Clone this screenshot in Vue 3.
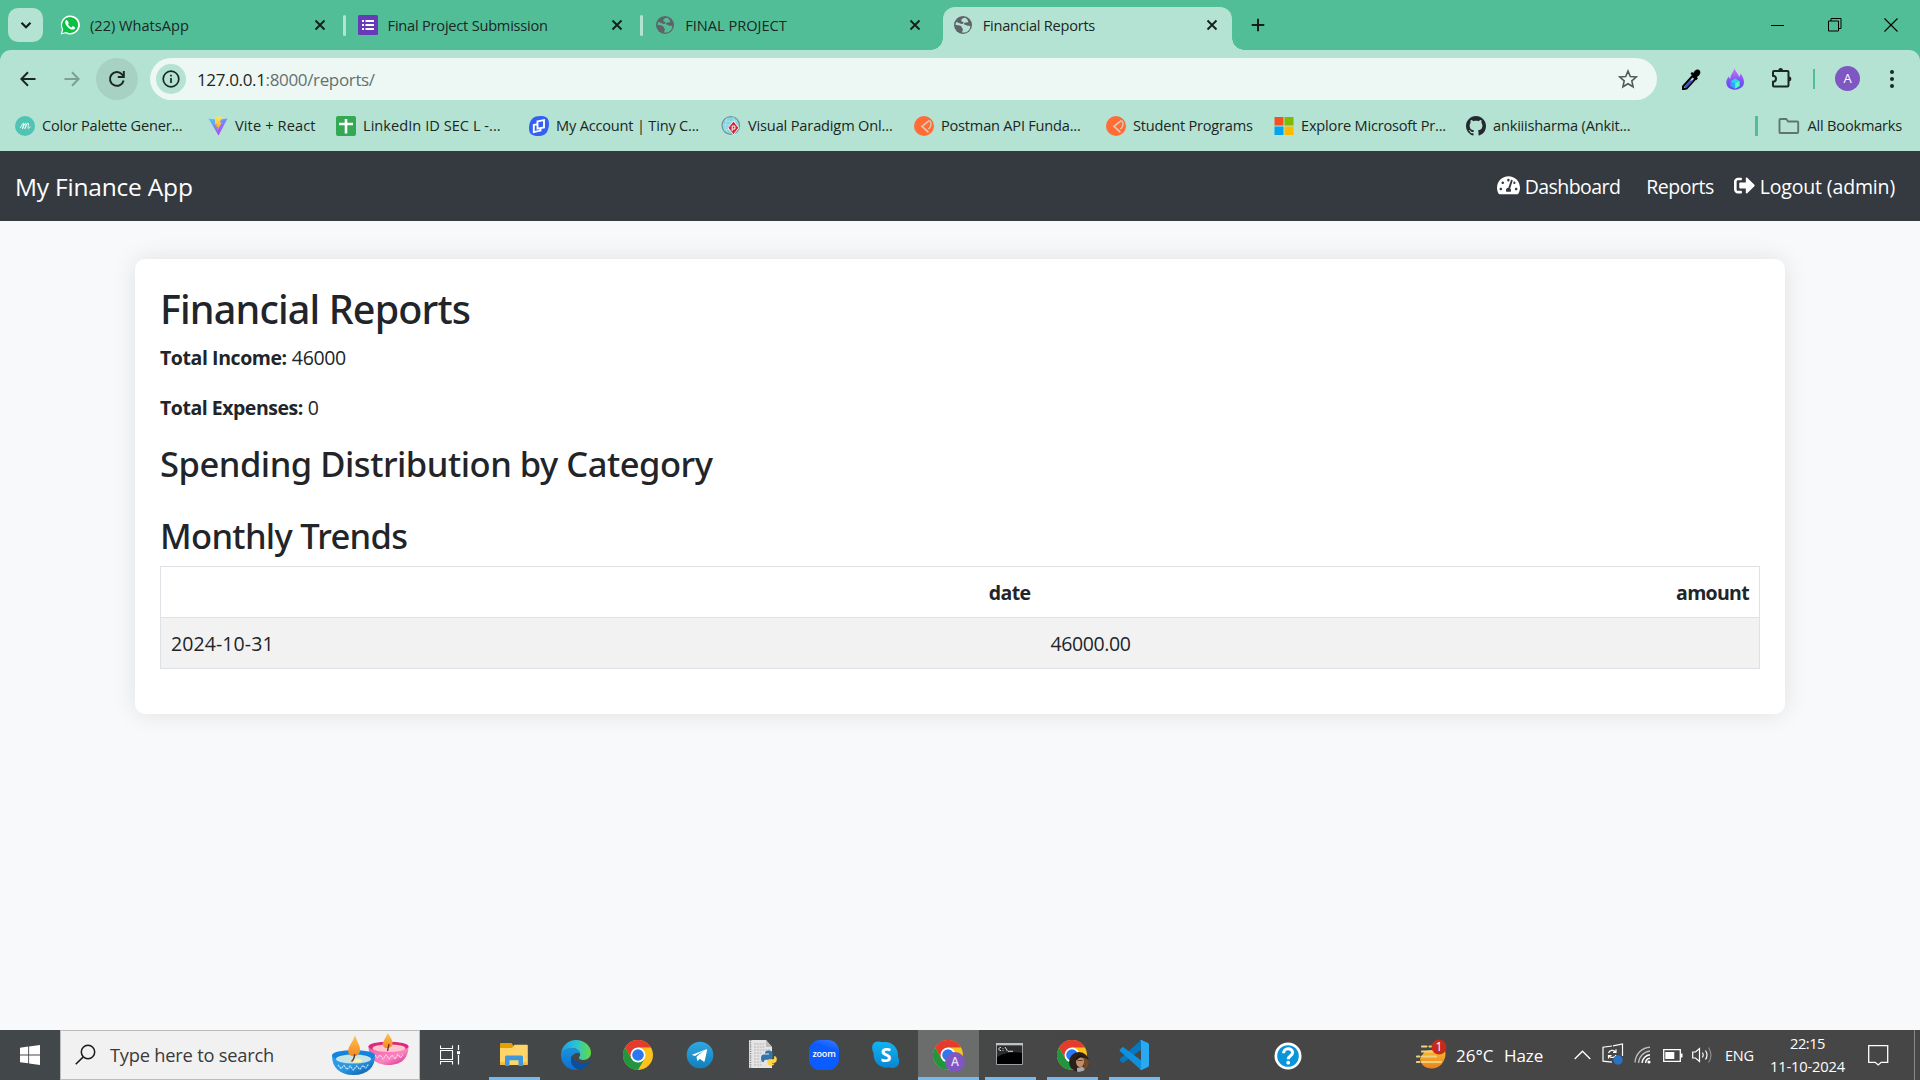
<script setup>
const tabs = [
  { icon: 'whatsapp', title: '(22) WhatsApp', track: 0 },
  { icon: 'forms', title: 'Final Project Submission', track: -0.22 },
  { icon: 'globe', title: 'FINAL PROJECT', track: 0 },
  { icon: 'globe', title: 'Financial Reports', track: -0.25, active: true },
]

const bookmarks = [
  { icon: 'palette', title: 'Color Palette Gener...', width: 193, track: -0.2 },
  { icon: 'vite', title: 'Vite + React', width: 128, track: 0.12 },
  { icon: 'sheets', title: 'LinkedIn ID SEC L -...', width: 193, track: 0.03 },
  { icon: 'tiny', title: 'My Account | Tiny C...', width: 192, track: -0.2 },
  { icon: 'paradigm', title: 'Visual Paradigm Onl...', width: 193, track: -0.16 },
  { icon: 'postman', title: 'Postman API Funda...', width: 192, track: -0.22 },
  { icon: 'postman', title: 'Student Programs', width: 168, track: -0.22 },
  { icon: 'microsoft', title: 'Explore Microsoft Pr...', width: 192, track: -0.2 },
  { icon: 'github', title: 'ankiiisharma (Ankit...', width: 180, track: -0.2 },
]

const rows = [{ date: '2024-10-31', amount: '46000.00' }]

const taskItems = [
  { icon: 'explorer', open: true },
  { icon: 'edge' },
  { icon: 'chrome' },
  { icon: 'telegram' },
  { icon: 'python' },
  { icon: 'zoom' },
  { icon: 'skype' },
  { icon: 'chrome', badge: 'letter', open: true, active: true },
  { icon: 'cmd', open: true },
  { icon: 'chrome', badge: 'photo', open: true },
  { icon: 'vscode', open: true },
]
</script>

<template>
  <div class="screen">
    <header class="browser">
      <div class="strip">
        <button class="tab-search">
          <svg width="14" height="14" viewBox="0 0 14 14"><path d="M2.5 4.7 7 9.2l4.5-4.5" fill="none" stroke="#15201b" stroke-width="2.2" /></svg>
        </button>
        <div class="tabs">
          <div v-for="(t, i) in tabs" :key="i" class="tab" :class="{ active: t.active, divided: i < 2 }">
            <svg v-if="t.icon === 'whatsapp'" width="20" height="20" viewBox="0 0 20 20">
              <path d="M.6 19.6 2 14.5A9.5 9.5 0 1 1 5.6 18.200z" fill="#fff" />
              <path d="M2.300 17.900l1-3.600a8 8 0 1 1 2.800 2.700z" fill="#0ac143" />
              <path d="M7.100 5.300c-.3-.5-.8-.5-1.200-.1-1.400 1.400-1 3.400.9 5.700 2 2.500 4.700 4.200 6.700 3.600 1.300-.4 1.700-1.500 1.500-2.300l-2.300-1.100-1.200 1.300c-1.500-.5-2.800-1.700-3.500-3.200l.8-1.100z" fill="#fff" />
            </svg>
            <svg v-else-if="t.icon === 'forms'" width="20" height="20" viewBox="0 0 20 20">
              <rect width="20" height="20" rx="1.500" fill="#673ab7" />
              <path d="M4 5h2v2H4zm3.500 0H16v2H7.500zM4 9h2v2H4zm3.500 0H16v2H7.500zM4 13h2v2H4zm3.500 0H16v2H7.500z" fill="#fff" />
            </svg>
            <svg v-else width="20" height="20" viewBox="0 0 24 24">
              <circle cx="12" cy="12" r="10.800" fill="#5f6368" />
              <path :fill="t.active ? '#b4e3d3' : '#52be98'" d="M14.500 3.300c-2 .5-4.500 1-4.600 3.300 0 1.500 1.500 1.400 2.300 1.900 1 .7.2 2.200-1.200 2.200-1.900.1-4.600-1.500-5.700-2.100-1.700-.9-2.200 1.600-2.200 3.400 1.700 0 4.500.200 6.300 1.100 1.500.8.7 2.100 1.800 2.900 1.300.9.500 2.500-.5 4.900 5.200 1.200 9.300-2.300 10-6.300.3-1.600-1-1.800-2.400-1.700-1.700.1-2.200-1.200-3.800-1.300-1.300-.1-1.900-1.200-.8-2.100 1.200-.9 3.200-.5 4.700-.8-.4-2.500-1.800-4.400-3.900-5.400z" />
            </svg>
            <span class="tab-title" :style="{ letterSpacing: t.track + 'px' }">{{ t.title }}</span>
            <svg class="tab-close" width="12" height="12" viewBox="0 0 12 12"><path d="m1.500 1.500 9 9m0-9-9 9" stroke="#15201b" stroke-width="1.900" /></svg>
          </div>
        </div>
        <svg class="new-tab" width="14" height="14" viewBox="0 0 14 14"><path d="M7 .7v12.600M.7 7h12.600" stroke="#15201b" stroke-width="2" /></svg>
        <div class="window-buttons">
          <svg width="14" height="14" viewBox="0 0 14 14"><path d="M0 7.500h13" stroke="#000" /></svg>
          <svg width="14" height="14" viewBox="0 0 14 14" fill="none" stroke="#000"><path d="M.5 3h10v10H.5zM3 3V.5h10v10h-2.500" /></svg>
          <svg width="14" height="14" viewBox="0 0 14 14"><path d="m.5.5 13 13m0-13-13 13" stroke="#000" stroke-width="1.100" /></svg>
        </div>
      </div>

      <div class="toolbar">
        <div class="address-row">
          <svg class="nav-back" width="16" height="16" viewBox="0 0 16 16" fill="none" stroke="#1b2723" stroke-width="2"><path d="M15.500 8H1.500M8 1.300 1.400 8 8 14.700" /></svg>
          <svg class="nav-forward" width="16" height="16" viewBox="0 0 16 16" fill="none" stroke="#7da094" stroke-width="2"><path d="M.5 8h14M8 1.300 14.600 8 8 14.700" /></svg>
          <span class="reload">
            <svg width="18" height="18" viewBox="0 0 18 18" fill="none" stroke="#1b2723" stroke-width="2"><path d="M15.600 10.500A6.900 6.900 0 1 1 14 4.300l1.400 1.500" /><path d="M15.800 1v6h-6" /></svg>
          </span>
          <div class="omnibox">
            <span class="site-info">
              <svg width="18" height="18" viewBox="0 0 18 18"><circle cx="9" cy="9" r="7.800" fill="none" stroke="#1b2723" stroke-width="1.700" /><path d="M9 8v5M9 4.800v1.800" stroke="#1b2723" stroke-width="1.700" /></svg>
            </span>
            <span class="url"><span class="host">127.0.0.1</span>:8000/reports/</span>
            <svg class="star" width="20" height="20" viewBox="0 0 20 20"><path d="m10 2 2.300 5.500 6 .5-4.500 3.900 1.300 5.900-5.100-3.100-5.100 3.100 1.300-5.900L1.700 8l6-.5z" fill="none" stroke="#4e5d57" stroke-width="1.600" /></svg>
          </div>
          <svg class="pipette" width="20" height="21" viewBox="0 0 20 21">
            <path d="M2 17.500 11.500 7l3 2.800L5.500 19.500l-3.500.6z" fill="#b9d7ff" stroke="#000" stroke-width="2" />
            <path d="m3 18 6-6.500h3.500L5 19.300z" fill="#3c53b8" />
            <path d="M9.500 4.500 11 3l1.500 1c1-2.500 2.500-3.800 4.500-3.500 2 .4 3 2.500 2 4.500-.6 1.200-1.700 2.200-3 3l.8 1.500-1.600 1.700z" fill="#000" />
          </svg>
          <svg class="flame" width="18" height="22" viewBox="0 0 18 22">
            <defs><linearGradient id="flame" x1="0" y1="0" x2="0" y2="1"><stop offset="0" stop-color="#d476ee" /><stop offset=".55" stop-color="#8054fa" /><stop offset="1" stop-color="#5a4ff0" /></linearGradient></defs>
            <path d="M8.500 0c.2 3 4 5.500 4.600 9 .8-.8 1.200-2 1.200-3.500 4 4.500 4.700 9.700 2.300 13C13 22.600 4.500 22.800 1.500 18.500-.9 15 .5 11 3 8.300c.1 1.500.6 2.300 1.500 2.700C4 7 7.500 4.500 8.500 0z" fill="url(#flame)" />
            <path d="m9.200 10.500 4.300 2.400v5l-4.300 2.600-4.400-2.600v-5z" fill="#28d5ed" /><path d="m4.800 12.900 4.400 2.500v5.100l-4.400-2.600z" fill="#36a3fb" /><path d="m9.200 15.400 4.300-2.500v5l-4.300 2.600z" fill="#4effb5" />
          </svg>
          <svg class="puzzle" width="22" height="22" viewBox="0 0 22 22"><path d="M3 4h13.500q1 0 1 1v13.500q0 1-1 1H3q-1 0-1-1v-3.700c4 0 4-6 0-6V5q0-1 1-1z" fill="none" stroke="#1b2723" stroke-width="2" /><path d="M7.200 3.500a2.400 2.400 0 0 1 4.800 0zM18 9.600a2.400 2.400 0 0 1 0 4.800z" fill="#1b2723" /></svg>
          <span class="rule"></span>
          <span class="avatar">A</span>
          <svg class="kebab" width="6" height="20" viewBox="0 0 6 20" fill="#1b2723"><circle cx="3" cy="3" r="2" /><circle cx="3" cy="10" r="2" /><circle cx="3" cy="17" r="2" /></svg>
        </div>

        <div class="bookmarks">
          <div v-for="b in bookmarks" :key="b.title" class="bookmark" :style="{ width: b.width + 'px' }">
            <svg v-if="b.icon === 'palette'" width="20" height="20" viewBox="0 0 20 20">
              <circle cx="10" cy="10" r="10" fill="#4fc4b4" />
              <path d="M5 12c1.200-.8 2.200-4.500 3.300-4.800.8-.2 0 2.800-.9 5.800C8.700 10 9.500 7.500 10.600 7.200c1-.2.1 2.800-.7 5.500 1-2.900 2.100-5.300 3.200-5.500 1.300 0-.8 4.800.1 5.100.7.200 1.500-.7 2.300-1.700" fill="none" stroke="#fff" stroke-width=".9" />
            </svg>
            <svg v-else-if="b.icon === 'vite'" width="20" height="20" viewBox="0 0 20 20">
              <defs><linearGradient id="vite" x1="0" y1="0" x2=".7" y2="1"><stop offset="0" stop-color="#41d1ff" /><stop offset="1" stop-color="#bd34fe" /></linearGradient><linearGradient id="bolt" x1="0" y1="0" x2="0" y2="1"><stop offset="0" stop-color="#ffea55" /><stop offset="1" stop-color="#ffa800" /></linearGradient></defs>
              <path d="M.5 2.500 10 4l9.500-1.500L10.500 19.500z" fill="url(#vite)" />
              <path d="m14 .2-6.800 1.300-.4 7.200 2-.5-.6 2.900 1.700-.5-.8 4.200 4.700-8.300-2 .3z" fill="url(#bolt)" />
            </svg>
            <svg v-else-if="b.icon === 'sheets'" width="20" height="20" viewBox="0 0 20 20">
              <rect width="20" height="20" rx="2" fill="#34a853" /><path d="M10 3v14.500M3 8h14" stroke="#fff" stroke-width="2.600" />
            </svg>
            <svg v-else-if="b.icon === 'tiny'" width="20" height="20" viewBox="0 0 20 20">
              <path d="M3.500 2.500C7-.5 14-.5 17.500 1.500c3 2 3 8 1.500 12-1.500 5-5 6.500-10 6.500-6 0-9-2-9-7.500 0-4 .8-7.500 3.500-10z" fill="#3260f5" />
              <path d="m8.500 5.400 6.500-1.300v7.300l-6.500 1.300zm0 2.800-3.700.9v7l6.700-1.500v-2" fill="none" stroke="#fff" stroke-width="1.900" />
            </svg>
            <svg v-else-if="b.icon === 'paradigm'" width="20" height="20" viewBox="0 0 20 20">
              <circle cx="9.800" cy="9.500" r="8.800" fill="#8dd3df" stroke="#6d9a9e" stroke-width="1.200" /><path d="M4 4c3 2 8 2 12 0M2 9h15M3 14c2-1 6-1 9 0M6 2c-2 5-2 10 0 14M12 1c2 3 3 7 2 12" fill="none" stroke="#a9e4ec" />
              <path d="m12.500 5 5.300 6.800-5.300 7-5.500-7z" fill="#d32732" stroke="#fff" stroke-width=".9" /><path d="m11.200 15V10h2.700v3h-2.500" fill="none" stroke="#fff" />
            </svg>
            <svg v-else-if="b.icon === 'postman'" width="20" height="20" viewBox="0 0 20 20">
              <circle cx="10" cy="10" r="10" fill="#ff6c37" /><path d="M15.500 4.300 8 10.300l6.500 6" fill="none" stroke="#d8cfb4" stroke-width="1.600" /><path d="M15.800 4.600c2 2.800 1.500 6.400-1.500 8.400" fill="none" stroke="#d8cfb4" stroke-width="1.300" />
            </svg>
            <svg v-else-if="b.icon === 'microsoft'" width="20" height="20" viewBox="0 0 20 20">
              <path d="M.5 1h9v8.500h-9z" fill="#f25022" /><path d="M10.500 1H19.500v8.500h-9z" fill="#7fba00" /><path d="M.5 10.500h9v8.500h-9z" fill="#00a4ef" /><path d="M10.500 10.500h9v8.500h-9z" fill="#ffb900" />
            </svg>
            <svg v-else width="20" height="20" viewBox="0 0 16 16">
              <path fill="#24292f" d="M8 0C3.580 0 0 3.580 0 8c0 3.540 2.290 6.530 5.470 7.590.4.070.55-.17.55-.38 0-.19-.01-.82-.01-1.490-2.010.37-2.530-.49-2.690-.94-.09-.23-.48-.94-.82-1.130-.28-.15-.68-.52-.01-.53.63-.01 1.080.58 1.230.82.72 1.210 1.870.87 2.330.66.07-.52.28-.87.51-1.070-1.780-.2-3.640-.89-3.640-3.950 0-.87.31-1.590.82-2.150-.08-.2-.36-1.020.08-2.120 0 0 .67-.21 2.200.82.64-.18 1.320-.27 2-.27s1.360.09 2 .27c1.530-1.040 2.200-.82 2.200-.82.44 1.100.16 1.920.08 2.120.51.56.82 1.270.82 2.150 0 3.070-1.870 3.750-3.650 3.950.29.25.54.73.54 1.480 0 1.070-.01 1.930-.01 2.200 0 .21.15.46.55.38A8.010 8.010 0 0 0 16 8c0-4.420-3.580-8-8-8z" />
            </svg>
            <span :style="{ letterSpacing: b.track + 'px' }">{{ b.title }}</span>
          </div>
          <div class="all-bookmarks">
            <svg width="22" height="18" viewBox="0 0 22 18"><path d="M2.500 2h5.700l2 2.500h9q1 0 1 1v9.500q0 1-1 1H2.500q-1 0-1-1V3q0-1 1-1z" fill="none" stroke="#63746d" stroke-width="1.900" /></svg>
            <span>All Bookmarks</span>
          </div>
        </div>
      </div>
    </header>

    <nav class="navbar">
      <span class="brand">My Finance App</span>
      <div class="links">
        <a class="dashboard">
          <svg width="23" height="20.500" viewBox="0 0 576 512" fill="#fff"><path d="M288 32C128.940 32 0 160.940 0 320c0 52.800 14.250 102.260 39.060 144.800 5.610 9.620 16.300 15.200 27.440 15.200h443c11.140 0 21.830-5.580 27.440-15.200C561.750 422.260 576 372.800 576 320c0-159.060-128.940-288-288-288zm0 64c14.710 0 26.580 10.130 30.320 23.650-1.110 2.260-2.640 4.230-3.450 6.670l-9.220 27.670c-5.130 3.490-10.970 6.010-17.640 6.010-17.670 0-32-14.330-32-32S270.330 96 288 96zM96 384c-17.670 0-32-14.330-32-32s14.330-32 32-32 32 14.330 32 32-14.330 32-32 32zm48-160c-17.670 0-32-14.330-32-32s14.330-32 32-32 32 14.330 32 32-14.330 32-32 32zm246.770-72.410l-61.330 184C343.130 347.330 352 364.540 352 384c0 11.720-3.380 22.550-8.880 32H232.880c-5.500-9.450-8.880-20.280-8.880-32 0-33.940 26.500-61.430 59.900-63.590l61.340-184.010c4.170-12.560 17.730-19.450 30.360-15.170 12.570 4.190 19.350 17.790 15.170 30.360zm14.660 57.200l15.520-46.550c3.470-1.290 7.130-2.230 11.050-2.230 17.670 0 32 14.330 32 32s-14.330 32-32 32c-11.380-.01-20.890-6.280-26.570-15.220zM480 384c-17.670 0-32-14.330-32-32s14.330-32 32-32 32 14.330 32 32-14.330 32-32 32z" /></svg>
          <span>Dashboard</span>
        </a>
        <a class="reports"><span>Reports</span></a>
        <a class="logout">
          <svg width="21" height="21" viewBox="0 0 512 512" fill="#fff"><path d="M497 273L329 441c-15 15-41 4.500-41-17v-96H152c-13.300 0-24-10.700-24-24v-96c0-13.300 10.700-24 24-24h136V88c0-21.400 25.900-32 41-17l168 168c9.300 9.400 9.300 24.600 0 34zM192 436v-40c0-6.600-5.400-12-12-12H96c-17.700 0-32-14.300-32-32V160c0-17.700 14.300-32 32-32h84c6.600 0 12-5.400 12-12V76c0-6.600-5.400-12-12-12H96c-53 0-96 43-96 96v192c0 53 43 96 96 96h84c6.600 0 12-5.400 12-12z" /></svg>
          <span>Logout (admin)</span>
        </a>
      </div>
    </nav>

    <main class="page">
      <section class="card">
        <h1>Financial Reports</h1>
        <p><strong class="income">Total Income:</strong> <span class="figure">46000</span></p>
        <p><strong class="expenses">Total Expenses:</strong> <span class="figure">0</span></p>
        <h2 class="spending">Spending Distribution by Category</h2>
        <h2 class="trends">Monthly Trends</h2>
        <table>
          <thead><tr><th class="col-date">date</th><th class="col-amount">amount</th></tr></thead>
          <tbody><tr v-for="r in rows" :key="r.date"><td class="cell-date">{{ r.date }}</td><td class="cell-amount">{{ r.amount }}</td></tr></tbody>
        </table>
      </section>
    </main>

    <footer class="taskbar">
      <div class="start">
        <svg width="20" height="20" viewBox="0 0 20 20" fill="#fff"><path d="M0 2.800 8.200 1.600v7.900H0zM9.100 1.500 20 0v9.500H9.100zM0 10.400h8.200v7.900L0 17.200zM9.100 10.400H20V20L9.100 18.500z" /></svg>
      </div>
      <div class="search">
        <svg class="lens" width="21" height="21" viewBox="0 0 21 21" fill="none" stroke="#1a1a1a" stroke-width="1.500"><circle cx="13" cy="8" r="6.700" /><path d="M8.300 12.900.7 20.300" /></svg>
        <span class="search-hint">Type here to search</span>
        <svg class="diyas" width="78" height="44" viewBox="0 0 78 44">
          <defs>
            <linearGradient id="blue" x1="0" x2="1" y2="1"><stop offset="0" stop-color="#2b9cf0" /><stop offset=".5" stop-color="#2b97e0" /><stop offset="1" stop-color="#0754a3" /></linearGradient>
            <linearGradient id="pink" x1="0" x2="1" y2="1"><stop offset="0" stop-color="#f35ea9" /><stop offset=".6" stop-color="#fb83c0" /><stop offset="1" stop-color="#cf237e" /></linearGradient>
            <linearGradient id="fire" x1="0" x2="0" y2="1"><stop offset="0" stop-color="#ffc552" /><stop offset="1" stop-color="#f5861f" /></linearGradient>
          </defs>
          <path d="M36.500 13c0 10 5 19 20 19s20-9 20-19z" fill="url(#pink)" /><ellipse cx="56.500" cy="13.500" rx="20" ry="4.800" fill="#da2a7c" /><ellipse cx="57" cy="15.300" rx="16.500" ry="3.800" fill="#ffc4cd" />
          <path d="m43 22 2.500 3L48 22l3 4 3-4 3 4 3-4 3 4 3-4.500 2.500 3L71 21.500" fill="none" stroke="#ffd9ec" stroke-width="1.100" stroke-dasharray="2 .8" />
          <path d="M55.500 0c3 4 6 8 4.800 12-1 3.400-7 4.200-8.800 1.500-2.600-4 2.500-7.500 4-13.500z" fill="url(#fire)" /><path d="m55.500 18 1.500-7" stroke="#6a3526" stroke-width="1.300" />
          <path d="M0 22.500C0 34 7 42 21.500 42S43 34 43 22.500z" fill="url(#blue)" /><ellipse cx="21.500" cy="22.500" rx="21.500" ry="5.500" fill="#1284e0" /><ellipse cx="21.500" cy="26" rx="17.500" ry="4.500" fill="#c7e4e4" /><ellipse cx="25" cy="27.500" rx="5" ry="2" fill="#fff0a8" />
          <path d="m6 32 3 3.500 3-3 3 4 3.200-3.500 3.200 4 3.200-4 3.200 3.500 3-4 3 2.500 2.500-3.500" fill="none" stroke="#bfe3fb" stroke-width="1.200" stroke-dasharray="2 .8" />
          <path d="M23 2c1.500 6 6 11 5 16.500-1.200 5.500-9.500 6.500-11.500 1.500-2-5.500 5-11 6.500-18z" fill="url(#fire)" /><path d="M19.500 28.500c2.200-1.500 3-4 3.200-7.500" fill="none" stroke="#6a3526" stroke-width="1.400" />
        </svg>
      </div>
      <div class="task-view">
        <svg width="21" height="20" viewBox="0 0 21 20" fill="none" stroke="#fff"><path d="M.5.5V3.500h12V.5M.5 5.500h12v9H.5zM.5 19.500v-3h12v3" stroke-width="1.100" /><path d="M18.500 0v5M18.500 10v9.500" stroke-width="1.200" /><path d="M17 6.200h3v3h-3z" fill="#fff" stroke="none" /></svg>
      </div>

      <div class="apps">
        <div v-for="(a, i) in taskItems" :key="i" class="app" :class="{ open: a.open, active: a.active }">
          <svg v-if="a.icon === 'explorer'" width="30" height="30" viewBox="0 0 30 30">
            <path d="M1 4q0-1 1-1h10.500l1.800 2.500V9H1z" fill="#e2a100" /><path d="M1 8h12l2.500-3.200H28q.8 0 .8 1V24q0 1-1 1H2q-1 0-1-1z" fill="#ffd56a" />
            <path d="M6 26v-9q0-1.500 1.500-1.500h15q1.500 0 1.500 1.500v9h-4.500v-5.800h-9V26z" fill="#3c99dd" /><path d="M1 22h5v3H2q-1 0-1-1zm23 0h4.800v2q0 1-1 1H24z" fill="#f4bd45" />
          </svg>
          <svg v-else-if="a.icon === 'edge'" width="30" height="30" viewBox="0 0 30 30">
            <defs>
              <linearGradient id="edge-a" x1="0" x2="1"><stop offset="0" stop-color="#1b9fe2" /><stop offset=".5" stop-color="#2cc3d5" /><stop offset="1" stop-color="#62dd3f" /></linearGradient>
              <linearGradient id="edge-b" x1="0" y1="0" x2="0" y2="1"><stop offset="0" stop-color="#1a93dc" /><stop offset="1" stop-color="#0d6fd0" /></linearGradient>
            </defs>
            <path d="M0 14C.8 5.800 7 0 15 0c8.300 0 15 5.800 15 12.800 0 4.500-3.500 7.200-7.500 7.200-3 0-4.700-1.200-4.500-2.500.2-1 1.200-1.400 1.200-3.300C19.200 11 15.500 8 10.800 8 6.500 8 2 10.500 0 14z" fill="url(#edge-a)" />
            <path d="M0 14C2 10 6.500 7.500 10.800 8c4.700 0 8.400 3 8.400 6.200-1.500-2-6.500-2-8.600 2.800-2 5 1 10.500 6.800 12.800C8 31.500 0 24 0 16z" fill="url(#edge-b)" />
            <path d="M10.600 16c-2 5.500 1 12 7.400 13.700 4.500-.6 8.500-3.200 10.500-7.200.3-.7-.2-1-.8-.7-5.500 2.700-14.700 1-17.100-5.800z" fill="#0c4fa0" />
          </svg>
          <svg v-else-if="a.icon === 'chrome'" width="30" height="30" viewBox="0 0 30 30">
            <circle cx="15" cy="15" r="15" fill="#fcc21b" /><path d="M2 7.500A15 15 0 0 1 28 7.500H15v7.500L8.500 18.700z" fill="#e33b2e" /><path d="M2 7.500 8.500 18.700 15 15l6.500 3.700L15 30A15 15 0 0 1 2 7.500z" fill="#21963f" />
            <circle cx="15" cy="15" r="7.500" fill="#fff" /><circle cx="15" cy="15" r="5.800" fill="#2b78f0" />
          </svg>
          <svg v-else-if="a.icon === 'telegram'" width="30" height="30" viewBox="0 0 30 30">
            <defs><linearGradient id="tg" x1="0" y1="0" x2="0" y2="1"><stop offset="0" stop-color="#2fa8e1" /><stop offset="1" stop-color="#1180bd" /></linearGradient></defs>
            <circle cx="15" cy="15" r="13.300" fill="url(#tg)" /><path d="m7 14.800 14.300-5.600q1-.2.800.8l-2.400 11q-.3 1-1.200.5l-3.700-2.700-2 1.900q-.5.400-.6-.2l-.7-3.800 7-6-8.500 5.300-3-1q-.7-.1 0-.2z" fill="#fff" />
          </svg>
          <svg v-else-if="a.icon === 'python'" width="30" height="30" viewBox="0 0 30 30">
            <path d="M2 0h17l6 7v21H2z" fill="#e4e4e4" /><path d="M19 0v7h6z" fill="#bbb" /><path d="M3.500 0v28" stroke="#777" stroke-width="1.500" stroke-dasharray="1 1.200" /><path d="M7 4h11M7 7h11M7 10h16M7 13h8M7 16h6M7 19h6M7 22h8M7 25h8" stroke="#b5b5b5" stroke-dasharray="2 .8" />
            <path d="M21.500 10.500c3 0 4 1 4 2.700v4.200c0 1.500-1 2.300-2.500 2.300h-4.200c-1.400 0-1.800.8-1.800 2.300-2.500 0-3-1.500-3-3.800 0-2.800 1-3.800 3-3.800h5V13.500h-4c0-2.200 1-3 3.500-3z" fill="#3475ad" />
            <path d="M24.500 25.500c-3 0-4-1-4-2.700v-1.300c0-1.500 1-2.300 2.500-2.300h2.700c1.400 0 1.600-.8 1.600-3.300 1.700.2 2.500 1.500 2.500 3.200 0 2.800-1 3.800-3 3.800h-3v.6h3.500c0 1.300-.8 2-2.800 2z" fill="#ffd343" />
          </svg>
          <div v-else-if="a.icon === 'zoom'" class="zoom-app">zoom</div>
          <div v-else-if="a.icon === 'skype'" class="skype-app">
            <svg width="30" height="30" viewBox="0 0 30 30"><defs><linearGradient id="sk" x1="0" y1="0" x2="0" y2="1"><stop offset="0" stop-color="#0fb5f2" /><stop offset="1" stop-color="#0b85d1" /></linearGradient></defs><path d="M2 4C4 1 8 1 11 2.200 20 .5 28 7 27 17c2 4 1.500 8-2 10-2.500 1.500-5 1-7 .5C9 29 2 22 2.700 13.500 1 10 .5 7 2 4z" fill="url(#sk)" /></svg>
            <b>S</b>
          </div>
          <svg v-else-if="a.icon === 'cmd'" width="30" height="30" viewBox="0 0 30 30">
            <path d="M1.500 3.500h26v21h-26z" fill="#000" stroke="#9aa0a4" /><path d="M1 3h27v2.500H1z" fill="#bcc3c8" /><path d="M2 6h25v7C18 11 9 13 2 17z" fill="#2d2d2d" /><path d="M4.500 7.500H6M4.500 10.500H6M4 8v2M8 8v.8M8 10v.8M10 7l2.500 4M13 11.300h5" stroke="#ddd" stroke-width="1" />
          </svg>
          <svg v-else width="30" height="30" viewBox="0 0 30 30">
            <path d="M1.200 20.800 3 22.600q.8.600 1.800 0L23 9V.5q-1-.5-2 .4L.8 19q-.6 1 .4 1.800z" fill="#0878bd" /><path d="M1.200 9.200 3 7.400q.8-.6 1.800 0L23 21v8.500q-1 .4-2-.4L.8 11q-.6-1 .4-1.800z" fill="#0d92df" /><path d="M22.500 0 29 3q1 .6 1 1.700v20.600q0 1.200-1 1.700l-6.500 3q-1 .2-1.500-.7 1 .3 1-1V1.700q0-1.300-1-1 .5-.9 1.500-.7z" fill="#2aa9f3" />
          </svg>
          <span v-if="a.badge === 'letter'" class="badge letter">A</span>
          <svg v-if="a.badge === 'photo'" class="badge" width="20" height="20" viewBox="0 0 20 20">
            <clipPath id="face"><circle cx="10" cy="10" r="10" /></clipPath>
            <g clip-path="url(#face)"><path d="M0 0h20v20H0z" fill="#2b2019" /><path d="M14 5l6 3v9l-5 1z" fill="#6f4a28" /><ellipse cx="11" cy="9.500" rx="4" ry="5.500" fill="#c28d6d" /><path d="M6.500 9c0-4 2-6 5-5.500 1.500.2 3 1 3.500 2.500-3-1-5-.5-6 1z" fill="#1d1512" /><path d="M8 16l6-1.500L17 20H8z" fill="#a9a7ae" /><path d="M8.500 8.500h5" stroke="#5a3d30" /></g>
          </svg>
        </div>
      </div>

      <svg class="help" width="28" height="28" viewBox="0 0 28 28"><circle cx="14" cy="14" r="13.500" fill="#fff" /><circle cx="14" cy="14" r="10.800" fill="#0a95da" /><path d="M9.600 11.200c0-6 9-5.600 9-.6 0 3.200-4.300 3.200-4.300 6.600" fill="none" stroke="#fff" stroke-width="3" /><circle cx="14.200" cy="20.700" r="1.900" fill="#fff" /></svg>

      <div class="tray">
        <svg class="weather" width="32" height="32" viewBox="0 0 32 32">
          <defs><linearGradient id="sun" x1="0" y1="0" x2="0" y2="1"><stop offset="0" stop-color="#f8c02f" /><stop offset="1" stop-color="#ef7f1c" /></linearGradient></defs>
          <path d="M4 20.500c.5 6 5 10 11.500 10C23 30.500 29 25 29.500 16c0-2-.5-4-1.500-6L9 13z" fill="url(#sun)" />
          <path d="M6 8.500h4.500M13.500 8.500H16M6 13.500h14M1 18.500h2.500M6 18.500h14M1 24h2.500M6 24h19" stroke="#ecd27f" stroke-width="2.200" stroke-linecap="round" />
          <circle cx="23" cy="9" r="7.500" fill="#c42b1c" /><text x="23" y="13.300" text-anchor="middle" font-size="12" fill="#fff" font-family="Open Sans, sans-serif">1</text>
        </svg>
        <span class="temp">26°C</span>
        <span class="haze">Haze</span>
        <svg class="caret" width="17" height="10" viewBox="0 0 17 10"><path d="m.7 9 7.800-7.800L16.300 9" fill="none" stroke="#fff" stroke-width="1.300" /></svg>
        <svg class="update" width="22" height="22" viewBox="0 0 22 22" fill="none" stroke="#fff" stroke-width="1.200"><path d="M10 3 1 4.200v14l9 1M11 2.800 20.500 1v12" /><path d="M6.500 10c1-3 5-3.700 7-1M14 6.300v3h-3M14 12c-1 2.800-5 3.400-7 1M6.500 15.500v-3h3" /><circle cx="16" cy="17" r="4.700" fill="#2a72c4" stroke="none" /></svg>
        <svg class="wifi" width="17" height="18" viewBox="0 0 17 18" fill="none" stroke-width="1.400"><path d="M1 16.500C1.500 8 8 1.500 16 1.200M4.500 17C5 10.500 10 5.500 16 5" stroke="#bdbdbd" /><path d="M8 17c.5-4.500 4-7.800 8-8.200M11.500 17c.3-2.500 2-4.500 4.500-4.700" stroke="#fff" /><circle cx="15" cy="16" r="1.600" fill="#fff" /></svg>
        <svg class="battery" width="20" height="13" viewBox="0 0 20 13"><path d="M.7.700h16.600v11.600H.7z" fill="none" stroke="#fff" stroke-width="1.300" /><path d="M2.300 3h9v7h-9zM17.500 4.500H19.500v4h-2z" fill="#fff" /></svg>
        <svg class="volume" width="21" height="18" viewBox="0 0 21 18" fill="none" stroke="#fff" stroke-width="1.200"><path d="M.7 6H3.500L7.500 2.500v13L3.500 12H.7z" /><path d="M10.500 6.500q1.600 2.500 0 5M13.500 4.500q3 4.500 0 9" /><path d="M16.500 1.500q5 7.500 0 15" stroke="#8d8d8d" /></svg>
        <span class="lang">ENG</span>
        <span class="clock"><span class="time">22:15</span><span class="day">11-10-2024</span></span>
        <svg class="notice" width="21" height="21" viewBox="0 0 21 21"><path d="M.7.700H19.700v16.600h-6.500L10.200 20l-3-2.700H.7z" fill="none" stroke="#fff" stroke-width="1.300" /></svg>
        <span class="peek"></span>
      </div>
    </footer>
  </div>
</template>

<style>
body { margin: 0; overflow: hidden; }
</style>

<style scoped>
* { box-sizing: border-box; }
svg { display: block; flex: none; }
.screen { width: 1920px; height: 1080px; display: flex; flex-direction: column; overflow: hidden; background: #f8f9fb; font-family: "Open Sans", "Noto Sans", sans-serif; color: #212529; }

.browser { flex: none; height: 151px; background: #52be98; color: #1b2723; font-size: 14.6px; }
.strip { height: 50px; display: flex; align-items: center; }
.tab-search { width: 35px; height: 34px; margin: 0 4px 0 8px; padding: 0; border: 0; border-radius: 10px; background: #b4e3d3; display: flex; align-items: center; justify-content: center; }
.tabs { display: flex; align-self: stretch; }
.tab { position: relative; width: 297.600px; height: 50px; padding: 0 19px 0 13px; display: flex; align-items: center; }
.tab-title { flex: 1; padding-left: 10px; white-space: nowrap; line-height: 22px; }
.tab-title, .tab svg { position: relative; }
.tab.divided::after { content: ""; position: absolute; right: -1px; top: 15px; width: 3px; height: 21px; border-radius: 2px; background: #b4e3d3; }
.tab.active::before { content: ""; position: absolute; left: 3px; right: 5px; top: 7px; bottom: 0; border-radius: 12px 12px 0 0; background: #b4e3d3; }
.tab.active::after { content: ""; position: absolute; left: -9px; right: -7px; bottom: 0; height: 12px; background: radial-gradient(circle at 0 0, transparent 11.500px, #b4e3d3 12px) left / 12px 12px no-repeat, radial-gradient(circle at 100% 0, transparent 11.500px, #b4e3d3 12px) right / 12px 12px no-repeat; }
.new-tab { margin-left: 14px; }
.window-buttons { margin-left: auto; padding: 0 22px 1px 0; display: flex; gap: 42.500px; }

.toolbar { height: 101px; border-radius: 11px 11px 0 0; background: #b4e3d3; }
.address-row { height: 58px; display: flex; align-items: center; }
.nav-back { margin-left: 20px; }
.nav-forward { margin-left: 28px; }
.reload { width: 42px; height: 42px; margin-left: 16px; border-radius: 50%; background: #a7d1c3; display: flex; align-items: center; justify-content: center; }
.omnibox { width: 1507px; height: 42px; margin-left: 12px; padding: 0 19px 0 6px; border-radius: 21px; background: #edf7f4; display: flex; align-items: center; }
.site-info { width: 30px; height: 30px; border-radius: 50%; background: #b4e3d3; display: flex; align-items: center; justify-content: center; }
.url { flex: 1; padding: 0 0 0 11px; font-size: 17px; letter-spacing: -.35px; color: #64726d; }
.host { color: #1b2723; }
.pipette { margin-left: 24px; }
.flame { margin-left: 25px; }
.puzzle { margin: 0 0 2px 27px; }
.rule { width: 2px; height: 20px; margin-left: 20px; background: #52be98; }
.avatar { width: 25px; height: 25px; margin: 0 0 1px 20px; border-radius: 50%; background: #7e57c2; color: #fff; font-size: 13px; line-height: 25px; text-align: center; }
.kebab { margin-left: 29px; }

.bookmarks { height: 36px; padding-left: 15px; display: flex; align-items: center; white-space: nowrap; }
.bookmark { flex: none; display: flex; align-items: center; gap: 7px; }
.bookmark span, .all-bookmarks span { padding-bottom: 2px; }
.all-bookmarks { margin-left: auto; padding: 0 18px 0 20px; height: 20px; border-left: 3px solid #52be98; display: flex; align-items: center; gap: 8px; letter-spacing: -.22px; }

.navbar { flex: none; height: 70px; padding: 0 25px 0 15px; background: #343a40; color: #fff; display: flex; align-items: center; justify-content: space-between; }
.brand { font-size: 24.500px; letter-spacing: -.2px; }
.links { display: flex; align-items: center; font-size: 19.500px; padding-top: 1px; }
.links a { display: flex; align-items: center; white-space: nowrap; }
.links a svg { margin-top: -2px; }
.dashboard { letter-spacing: -.55px; gap: 5px; margin-right: 26px; }
.reports { letter-spacing: -.5px; margin-right: 20px; }
.logout { letter-spacing: -.15px; gap: 5px; }

.page { flex: 1; padding-top: 38px; display: flex; justify-content: center; align-items: flex-start; font-size: 19.500px; }
.card { width: 1650px; height: 455px; padding: 26px 25px 25px; border-radius: 10px; background: #fff; box-shadow: 0 0 25px rgba(0, 0, 0, .1); }
h1, h2 { margin: 0; font-family: "Noto Sans", sans-serif; font-weight: 500; }
h1 { font-size: 39.500px; line-height: 48px; letter-spacing: -.85px; margin-bottom: 10px; }
h2 { font-size: 34.500px; line-height: 42px; }
p { margin: 0 0 20px; line-height: 30px; }
.income { letter-spacing: -.42px; }
.expenses { letter-spacing: -.48px; }
.figure { letter-spacing: -.35px; }
.spending { letter-spacing: -.47px; margin-bottom: 30px; }
.trends { letter-spacing: -.68px; margin-bottom: 9px; }
table { width: 1600px; border-collapse: collapse; table-layout: fixed; border: 1px solid #dee2e6; }
tr { border: 1px solid #dee2e6; }
th, td { height: 51px; padding: 1px 10px 0; line-height: 30px; }
th { text-align: right; font-weight: 700; }
td { text-align: left; background: #f2f2f2; }
.col-date { width: 880px; letter-spacing: -.6px; }
.col-amount { letter-spacing: -.7px; }
.cell-date { letter-spacing: .1px; }
.cell-amount { letter-spacing: -.4px; }

.taskbar { flex: none; height: 50px; display: flex; background: linear-gradient(90deg, #42474a, #464848 45%, #464646 60%); color: #fff; }
.start { width: 60px; padding: 15px 0 0 20px; }
.search { width: 360px; border: 1px solid #bcbcbc; background: #f1f1f1; color: #3a3a3a; display: flex; align-items: center; font-size: 18.300px; letter-spacing: -.22px; }
.search-hint { padding-bottom: 2px; }
.lens { margin: 0 14px 2px 14px; }
.diyas { margin: 0 9px 0 auto; }
.task-view { width: 60px; padding: 15px 0 0 20px; }
.apps { display: flex; padding-left: 5px; }
.app { position: relative; width: 61px; height: 50px; margin-right: 1px; padding: 10px 0 0 14px; }
.app.open::after { content: ""; position: absolute; left: 4px; right: 6px; bottom: 0; height: 3px; background: #76b9ed; }
.app.active { left: -1px; padding-left: 15px; background: #6b6d6c; }
.app.active::after { left: 0; right: 0; }
.badge { position: absolute; left: 26px; top: 22px; }
.active .badge { left: 27px; }
.letter { width: 20px; height: 20px; border-radius: 50%; background: #7e57c2; color: #e6def5; font-size: 12px; font-weight: 600; line-height: 20px; text-align: center; }
.zoom-app { width: 30px; height: 30px; border-radius: 11px; background: linear-gradient(20deg, #0b5cff 70%, #3f7dff); font-size: 9px; font-weight: 600; line-height: 27px; text-align: center; letter-spacing: -.2px; }
.skype-app { position: relative; width: 30px; height: 30px; }
.skype-app b { position: absolute; inset: 0; font-size: 20px; line-height: 29px; text-align: center; }
.help { margin: 12px 0 0 107px; }
.tray { flex: 1; display: flex; align-items: center; position: relative; white-space: nowrap; }
.weather { margin: 0 0 2px 114px; }
.temp { margin-left: 8px; width: 37px; font-size: 17px; }
.haze { margin-left: 11px; width: 39px; font-size: 17px; letter-spacing: -.1px; }
.caret { margin-left: 31px; }
.update { margin: 0 0 2px 11px; }
.wifi { margin-left: 10px; }
.battery { margin-left: 12px; }
.volume { margin-left: 9px; }
.lang { margin-left: 12px; width: 30px; font-size: 14.500px; letter-spacing: -.2px; }
.clock { margin-left: 12px; width: 81px; display: flex; flex-direction: column; align-items: center; font-size: 14.700px; line-height: 23px; padding-bottom: 1px; }
.time { letter-spacing: -.5px; }
.day { letter-spacing: -.15px; }
.notice { margin-left: 20px; }
.peek { margin-left: auto; width: 6px; height: 50px; border-left: 1px solid #888; }
</style>
